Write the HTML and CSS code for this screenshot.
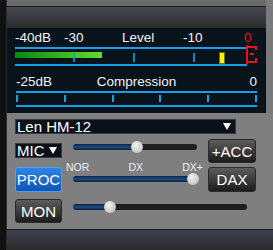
FILE: index.html
```html
<!DOCTYPE html>
<html lang="en">

<head>
  <meta charset="UTF-8">
  <meta name="viewport" content="width=device-width, initial-scale=1.0">
  <title>TX Panel</title>
  <link rel="stylesheet" href="styles.css">
</head>

<body>
  <div class="frame">
    <div class="edge-left"></div>

    <div class="main">
      <div class="top-strip"></div>
      <div class="title-bar"></div>

      <!-- meters -->
      <div class="meters">
        <div class="level-labels">
          <span>-40dB</span>
          <span>-30</span>
          <span>Level</span>
          <span>-10</span>
          <span class="red">0</span>
        </div>
        <div class="level-row">
          <div class="level-scale">
            <div class="scale-line"></div>
            <div class="level-track">
              <div class="level-bar" style="width:87px"></div>
              <div class="tick tick-1"></div>
              <div class="tick tick-2"></div>
              <div class="tick tick-3"></div>
              <div class="peak"></div>
            </div>
            <div class="scale-line"></div>
          </div>
          <svg class="clip-mark" width="12" height="20" viewBox="0 0 12 20">
            <rect x="0" y="0" width="2" height="19" fill="#e3141b" />
            <rect x="0" y="1" width="11" height="2" fill="#e3141b" />
            <rect x="9" y="1" width="2" height="4" fill="#e3141b" />
            <rect x="4" y="8" width="4" height="2" fill="#e3141b" />
            <rect x="0" y="16" width="11" height="2" fill="#e3141b" />
            <rect x="9" y="13" width="2" height="5" fill="#e3141b" />
          </svg>
        </div>

        <div class="comp-labels">
          <span>-25dB</span>
          <span>Compression</span>
          <span class="right">0</span>
        </div>
        <div class="comp-scale">
          <div class="scale-line"></div>
          <div class="comp-ticks">
            <i></i><i></i><i></i><i></i><i></i><i></i>
          </div>
          <div class="scale-line"></div>
        </div>
      </div>

      <!-- controles -->
      <div class="controls">
        <div class="select preset">
          <span>Len HM-12</span>
          <span class="arrow"></span>
        </div>

        <div class="pad-grid">
          <div class="select mic">
            <span>MIC</span>
            <span class="arrow"></span>
          </div>
          <div class="slider slider-1">
            <div class="slider-fill" style="width:64px"></div>
            <div class="slider-thumb"></div>
            <div class="slider-rest"></div>
          </div>
          <div class="btn acc">+ACC</div>

          <div class="btn btn-blue proc">PROC</div>
          <div class="mid">
            <div class="mode-labels">
              <span>NOR</span>
              <span>DX</span>
              <span>DX+</span>
            </div>
            <div class="slider slider-2">
              <div class="slider-fill" style="width:120px"></div>
              <div class="slider-thumb"></div>
              <div class="slider-rest"></div>
            </div>
          </div>
          <div class="btn dax">DAX</div>

          <div class="btn mon">MON</div>
          <div class="slider slider-3">
            <div class="slider-fill" style="width:37px"></div>
            <div class="slider-thumb"></div>
            <div class="slider-rest"></div>
          </div>
        </div>
      </div>

      <div class="bottom-bar"></div>
    </div>
  </div>
</body>

</html>
```

FILE: styles.css
```css
/* painel TX */
body {
  margin: 0;
  background: #7a7a7a;
  font-family: "Liberation Sans", Arial, sans-serif;
}

.frame {
  display: flex;
  width: 273px;
  height: 250px;
}

.edge-left {
  width: 6px;
  background: #111;
  border-right: 1px solid #2c2c2c;
}

.main {
  flex: 1;
  display: flex;
  flex-direction: column;
}

.top-strip {
  height: 6px;
  background: #6b6b6b;
  border-bottom: 1px solid #1e1e1e;
  margin-right: 7px;
}

.title-bar {
  height: 21px;
  margin-right: 7px;
  background: linear-gradient(#474a52, #2a2a2a);
}

/* medidores */
.meters {
  height: 85px;
  box-sizing: border-box;
  margin-right: 7px;
  padding: 2px 0 0 8px;
  background: #09131b;
  color: #f4f4f4;
  font-size: 13.5px;
}

.level-labels {
  display: grid;
  grid-template-columns: 49px 58px 61px 61px auto;
  height: 15px;
  line-height: 15px;
}

.red {
  color: #e8141b;
}

.level-row {
  display: flex;
  margin-top: 2px;
}

.level-scale {
  width: 232px;
}

.scale-line {
  height: 2px;
  background: #16a0ea;
}

.level-track {
  position: relative;
  height: 12px;
}

.level-bar {
  height: 6px;
  margin-top: 3px;
  background: linear-gradient(to right, #078a10, #62dd2a);
}

.tick {
  position: absolute;
  top: 1px;
  width: 2px;
  height: 9px;
  background: #16a0ea;
  opacity: 0.8;
}

.tick-1 {
  left: 58px;
}

.tick-2 {
  left: 118px;
}

.tick-3 {
  left: 178px;
}

.peak {
  position: absolute;
  left: 204px;
  top: 0;
  width: 4px;
  height: 10px;
  background: #f4f400;
  border: 1px solid #6f6f00;
}

.clip-mark {
  margin: -2px 0 -2px -1px;
}

.comp-labels {
  display: grid;
  grid-template-columns: 1fr auto 1fr;
  width: 241px;
  margin: 8px 0 0 1px;
  line-height: 15px;
}

.comp-labels .right {
  justify-self: end;
}

.comp-scale {
  width: 241px;
  margin: 2px 0 0 1px;
}

.comp-ticks {
  display: flex;
  justify-content: space-between;
  height: 12px;
  padding-top: 2px;
  box-sizing: border-box;
}

.comp-ticks i {
  width: 2px;
  height: 7px;
  background: #16a0ea;
}

/* controles */
.controls {
  height: 116px;
  box-sizing: border-box;
  padding: 6px 0 0 8px;
  background: #7f7f7f;
  color: #fff;
}

.select {
  display: flex;
  align-items: center;
  justify-content: space-between;
  box-sizing: border-box;
  height: 15px;
  padding: 0 4px 0 1px;
  background: #09121a;
  border: 1px solid #3a3a3a;
  font-size: 15px;
  line-height: 13px;
}

.preset {
  width: 221px;
}

.arrow {
  width: 0;
  height: 0;
  border-left: 4px solid transparent;
  border-right: 4px solid transparent;
  border-top: 7px solid #fff;
}

.pad-grid {
  display: grid;
  grid-template-columns: 58px 135px 48px;
  grid-template-rows: 25px 35px 24px;
  margin-top: 5px;
}

.mic {
  width: 47px;
  margin-top: 4px;
}

.btn {
  display: flex;
  align-items: center;
  justify-content: center;
  box-sizing: border-box;
  border-radius: 3px;
  border: 1px solid #2a2a2a;
  background: linear-gradient(#5c5c5c, #1b1b1b);
  font-size: 15px;
  color: #fff;
}

.btn-blue {
  background: linear-gradient(#2c86e6, #0d55b5);
  border-color: #4f9ef0;
}

.acc {
  width: 48px;
  height: 24px;
}

.proc,
.dax {
  height: 25px;
  margin-top: 3px;
}

.proc {
  width: 47px;
}

.mon {
  width: 47px;
  height: 24px;
}

.mode-labels {
  display: flex;
  justify-content: space-between;
  width: 137px;
  margin: -2px 0 0 -7px;
  font-size: 10.5px;
  line-height: 10px;
  color: #eee;
}

/* sliders */
.slider {
  display: flex;
  align-items: center;
  height: 12px;
  margin-top: 2px;
}

.mode-labels + .slider {
  margin-top: 1px;
}

.slider-1,
.slider-2 {
  width: 124px;
}

.slider-3 {
  grid-column: 2 / 4;
  width: 174px;
}

.slider-fill {
  height: 6px;
  border-radius: 3px 0 0 3px;
  background: linear-gradient(#0a1f38, #1d4f86, #0a1f38);
}

.slider-thumb {
  position: relative;
  z-index: 1;
  width: 12px;
  height: 12px;
  margin: 0 -6px;
  border-radius: 50%;
  background: radial-gradient(circle at 40% 35%, #f2f2f2, #b4b4b4);
}

.slider-rest {
  flex: 1;
  height: 6px;
  border-radius: 0 3px 3px 0;
  background: #1e1e1e;
}

.bottom-bar {
  flex: 1;
  border-top: 1px solid #1d1d1d;
  background: linear-gradient(#3d424d, #2a2a2a);
}
```
